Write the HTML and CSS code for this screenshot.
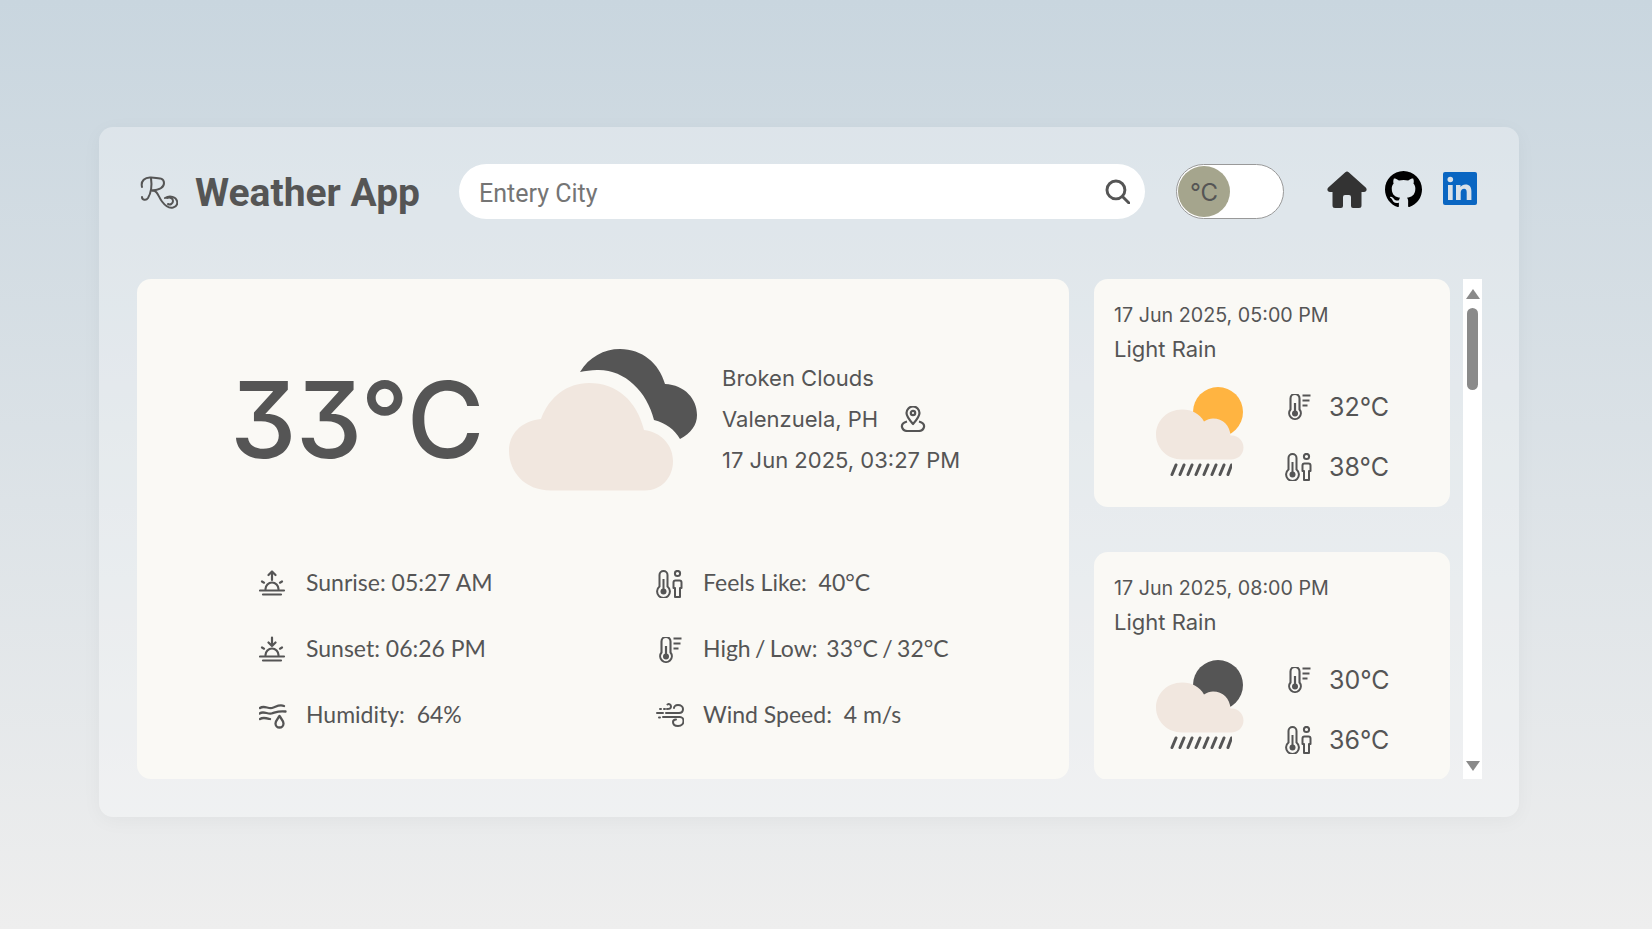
FILE: index.html
```html
<!DOCTYPE html>
<html lang="en">
<head>
<meta charset="utf-8">
<title>Weather App</title>
<link rel="stylesheet" href="styles.css">
</head>
<body>
<svg class="defs" aria-hidden="true">
  <symbol id="therm-lines" viewBox="0 0 24 26">
    <path d="M3.500 15.500V4.500a4.500 4.500 0 0 1 9 0v11a5.800 5.800 0 1 1-9 0z" fill="none" stroke="currentColor" stroke-width="2.100"/>
    <circle cx="8" cy="19.500" r="3" fill="currentColor"/>
    <path d="M8 9v10" stroke="currentColor" stroke-width="2.200"/>
    <path d="M15.500 1.500h8M15.500 6.500h7M15.500 11.500h5" stroke="currentColor" stroke-width="2.200"/>
  </symbol>
  <symbol id="therm-person" viewBox="0 0 28 28">
    <path d="M3.500 16.500V5a4 4 0 0 1 8 0v11.500a6.400 6.400 0 1 1-8 0z" fill="none" stroke="currentColor" stroke-width="2"/>
    <circle cx="7.500" cy="21.500" r="3" fill="currentColor"/>
    <path d="M7.500 9v12" stroke="currentColor" stroke-width="2"/>
    <circle cx="21.500" cy="3.500" r="2.600" fill="none" stroke="currentColor" stroke-width="2"/>
    <path d="M19 27v-9h-1.500v-5.500a2 2 0 0 1 2-2h4a2 2 0 0 1 2 2V18H24v9z" fill="none" stroke="currentColor" stroke-width="2" stroke-linejoin="round"/>
  </symbol>
  <symbol id="rain" viewBox="0 0 62 13">
    <path d="M2 11.500l4-9.500M10 11.500l4-9.500M18 11.500l4-9.500M26 11.500l4-9.500M34 11.500l4-9.500M42 11.500l4-9.500M50 11.500l4-9.500M58 11.500l3.500-9.500" fill="none" stroke="#555" stroke-width="3" stroke-linecap="round"/>
  </symbol>
  <symbol id="small-cloud" viewBox="0 0 88 51">
    <path d="M26 50.500C11 50.500 0 39 0 25.500S11 .5 26 .5c10 0 18 4.500 22 12 3-2 6-3 9-3 10 0 17 7 17.500 17H76c6 0 11.500 5 11.500 12S82 50.500 75 50.500z" fill="#f1e7df"/>
  </symbol>
</svg>

<main class="panel">
  <header class="topbar">
    <svg class="logo" viewBox="0 0 38 34" fill="none" stroke="#555" stroke-width="2" stroke-linecap="round" aria-label="Logo">
      <path d="M2 11C0.500 5 5 1 11 1.500c7 .5 13 0 13 5.500 0 5-6 7-12 7.500"/>
      <path d="M11 2c1 7 0 15-3 20-2 3-6 2-6-1"/>
      <path d="M12 14.500c6 0 6 6 10 11 3 4 7 7 11 6 3-1 5-3 4-6.500-1-4-7-6-12-3"/>
      <path d="M27 22c3-1 6 0 6 3s-3 4-5 3"/>
    </svg>
    <h1 class="title">Weather App</h1>
    <div class="search">
      <input class="search-input" type="text" placeholder="Entery City">
      <svg class="search-icon" viewBox="0 0 24 24" fill="none" stroke="#555" stroke-width="2.800" stroke-linecap="round"><circle cx="10.500" cy="10.500" r="8.600"/><path d="M17 17l6 6"/></svg>
    </div>
    <div class="toggle"><span class="knob">°C</span></div>
    <nav class="links">
      <svg class="home" viewBox="0 0 40 38"><path d="M20 1.500a2.500 2.500 0 0 1 1.700.7l17 15.300c1.900 1.800.6 4.500-1.700 4.500h-2.500v13.500a2.500 2.500 0 0 1-2.500 2.500h-6a2 2 0 0 1-2-2v-9a2 2 0 0 0-2-2h-4a2 2 0 0 0-2 2v9a2 2 0 0 1-2 2H8a2.500 2.500 0 0 1-2.500-2.500V22H3c-2.300 0-3.600-2.700-1.700-4.500l17-15.300a2.500 2.500 0 0 1 1.700-.7z" fill="#333"/></svg>
      <svg class="github" viewBox="0 0 16 16"><path d="M8 0C3.580 0 0 3.580 0 8c0 3.540 2.290 6.530 5.470 7.590.4.070.55-.17.55-.38 0-.19-.01-.82-.01-1.490-2.010.37-2.530-.49-2.690-.94-.09-.23-.48-.94-.82-1.130-.28-.15-.68-.52-.01-.53.63-.01 1.080.58 1.230.82.72 1.210 1.870.87 2.330.66.070-.52.28-.87.51-1.070-1.780-.2-3.640-.89-3.640-3.950 0-.87.31-1.590.82-2.150-.08-.2-.36-1.020.08-2.120 0 0 .67-.21 2.200.82.64-.18 1.320-.27 2-.27.68 0 1.360.09 2 .27 1.530-1.040 2.200-.82 2.200-.82.44 1.100.16 1.920.08 2.120.51.56.82 1.270.82 2.150 0 3.070-1.870 3.750-3.650 3.950.29.25.54.73.54 1.480 0 1.070-.01 1.930-.01 2.200 0 .21.15.46.55.38A8.013 8.013 0 0 0 16 8c0-4.420-3.580-8-8-8z" fill="#000"/></svg>
      <svg class="linkedin" viewBox="0 0 34 34"><rect width="34" height="33" rx="2" fill="#0a66c2"/><circle cx="7.300" cy="7.500" r="2.800" fill="#dae1e8"/><path d="M5 13h4.700v15H5zM13 13h4.500v2.100c1-1.500 2.700-2.500 4.900-2.500 4.200 0 6 2.600 6 6.900V28h-4.700v-7.700c0-2.200-.7-3.600-2.600-3.600-2 0-3.400 1.400-3.400 3.800V28H13z" fill="#dae1e8"/></svg>
    </nav>
  </header>

  <div class="content">
    <section class="current">
      <div class="hero">
        <div class="temp">33°C</div>
        <svg class="hero-icon" viewBox="0 0 188 142">
          <path d="M71 23C80 8 95 0 111 0c22 0 39 14 45 35 20 1 32 15 32 31 0 10-6 18-17 24-5-9-14-16-26-19C138 42 115 20 88 21c-6 0-12 1-17 2z" fill="#555"/>
          <path d="M42 141.500C15 141.500 0 122 0 102c0-17 12-30 32-32 8-22 26-36 48-36 28 0 48 18 55 47 17 2 29 15 29 31 0 17-12 29.500-28 29.500z" fill="#f1e7df"/>
        </svg>
        <div class="summary">
          <div class="summary-line">Broken Clouds</div>
          <div class="summary-line">Valenzuela, PH
            <svg class="pin" viewBox="0 0 26 26" fill="none" stroke="#555" stroke-width="2.200" stroke-linejoin="round"><path d="M13 18c-4-4.500-6.500-7.500-6.500-11a6.500 6.500 0 0 1 13 0c0 3.500-2.500 6.500-6.500 11z"/><circle cx="13" cy="7" r="2.200"/><path d="M7 15.500c-3.500 1-5.500 3-5 5.500.5 2.500 3 4 5.500 4h11c2.500 0 5-1.500 5.500-4 .5-2.500-1.500-4.500-5-5.500"/></svg>
          </div>
          <div class="summary-line">17 Jun 2025, 03:27 PM</div>
        </div>
      </div>
      <div class="stats">
        <div class="stat">
          <svg class="stat-icon" viewBox="0 0 28 28" fill="none" stroke="#555" stroke-width="2.200" stroke-linecap="round" stroke-linejoin="round"><path d="M13 10V1.500M9.500 5L13 1.500 16.500 5M6.500 19a6.500 6.500 0 0 1 13 0M1 20.500h24M4 24.500h18M3 11.500l2 1.200M23 11.500l-2 1.200"/></svg>
          <span>Sunrise: 05:27 AM</span>
        </div>
        <div class="stat">
          <svg class="stat-icon" viewBox="0 0 28 28"><use href="#therm-person" color="#555"/></svg>
          <span>Feels Like:&nbsp; 40°C</span>
        </div>
        <div class="stat">
          <svg class="stat-icon" viewBox="0 0 28 28" fill="none" stroke="#555" stroke-width="2.200" stroke-linecap="round" stroke-linejoin="round"><path d="M13 1.500V10M9.500 6.500L13 10l3.500-3.500M6.500 19a6.500 6.500 0 0 1 13 0M1 20.500h24M4 24.500h18M3 11.500l2 1.200M23 11.500l-2 1.200"/></svg>
          <span>Sunset: 06:26 PM</span>
        </div>
        <div class="stat">
          <svg class="stat-icon" viewBox="0 0 28 28"><use href="#therm-lines" x="2" y="1" width="24" height="26" color="#555"/></svg>
          <span class="stat-tight">High / Low:&nbsp; 33°C / 32°C</span>
        </div>
        <div class="stat">
          <svg class="stat-icon" viewBox="0 0 28 28" fill="none" stroke="#555" stroke-width="2.300" stroke-linecap="round" stroke-linejoin="round"><path d="M1 6c4-3 8 1 12 0s7-4 12-2M0.500 11.500c4-3 8 1 12 0s7-3 14-2M1 17c3-2 6-1 10 0"/><path d="M20.500 14c-2 3-4 5-4 7.500a4 4 0 0 0 8 0c0-2.500-2-4.500-4-7.500z"/></svg>
          <span>Humidity:&nbsp; 64%</span>
        </div>
        <div class="stat">
          <svg class="stat-icon" viewBox="0 0 28 28" fill="none" stroke="#555" stroke-width="2" stroke-linecap="round"><path d="M4 7h1M8 7h1M11 7c3 0 4-.5 4-2.500S13 1.500 11.500 2.500M1 11h6M10 11h13c3 0 4-2 4-4s-2-4-5-4-4 2-4 3M3 15.500h1M7 15h17c2 0 3.500 2 3.500 4s-1.500 5-5.500 5-5-2-5-4 1.500-2.500 3-2.500"/></svg>
          <span>Wind Speed:&nbsp; 4 m/s</span>
        </div>
      </div>
    </section>

    <section class="forecast">
      <article class="card">
        <div class="card-date">17 Jun 2025, 05:00 PM</div>
        <div class="card-desc">Light Rain</div>
        <div class="card-body">
          <div class="card-icon">
            <span class="orb orb-sun"></span>
            <svg class="card-cloud" viewBox="0 0 88 51"><use href="#small-cloud"/></svg>
            <svg class="card-rain" viewBox="0 0 62 13"><use href="#rain"/></svg>
          </div>
          <div class="card-temps">
            <div class="card-temp"><svg class="temp-icon" viewBox="0 0 28 28"><use href="#therm-lines" x="2" y="1" width="24" height="26"/></svg><span>32°C</span></div>
            <div class="card-temp"><svg class="temp-icon" viewBox="0 0 28 28"><use href="#therm-person"/></svg><span>38°C</span></div>
          </div>
        </div>
      </article>
      <article class="card">
        <div class="card-date">17 Jun 2025, 08:00 PM</div>
        <div class="card-desc">Light Rain</div>
        <div class="card-body">
          <div class="card-icon">
            <span class="orb orb-moon"></span>
            <svg class="card-cloud" viewBox="0 0 88 51"><use href="#small-cloud"/></svg>
            <svg class="card-rain" viewBox="0 0 62 13"><use href="#rain"/></svg>
          </div>
          <div class="card-temps">
            <div class="card-temp"><svg class="temp-icon" viewBox="0 0 28 28"><use href="#therm-lines" x="2" y="1" width="24" height="26"/></svg><span>30°C</span></div>
            <div class="card-temp"><svg class="temp-icon" viewBox="0 0 28 28"><use href="#therm-person"/></svg><span>36°C</span></div>
          </div>
        </div>
      </article>
    </section>

    <div class="scrollbar">
      <span class="arrow arrow-up"></span>
      <span class="thumb"></span>
      <span class="arrow arrow-down"></span>
    </div>
  </div>
</main>
</body>
</html>
```
FILE: styles.css
```css
* { box-sizing: border-box; }
html, body { height: 100%; }
body {
  margin: 0;
  height: 929px;
  overflow: hidden;
  padding: 127px 0 0 99px;
  background: linear-gradient(180deg, #c9d6df 0%, #eeeeee 100%);
  color: #555;
  font-family: "Inter", "Liberation Sans", sans-serif;
}
.defs { position: absolute; width: 0; height: 0; overflow: hidden; }

.panel {
  width: 1420px;
  height: 690px;
  padding: 37px 37px 38px 38px;
  border-radius: 14px;
  background: rgba(255, 255, 255, 0.3);
  box-shadow: 0 4px 20px rgba(0, 0, 0, 0.04);
}

.topbar { display: flex; align-items: center; height: 55px; margin-bottom: 60px; }
.logo { width: 38px; height: 34px; margin-left: 3px; margin-top: 3px; flex: none; }
.title {
  width: 222px;
  margin: 3px 42px 0 17px;
  font: 700 39px/1 "Roboto", sans-serif;
  white-space: nowrap;
  flex: none;
}
.search {
  display: flex;
  align-items: center;
  width: 686px;
  height: 55px;
  padding: 0 15px 0 20px;
  border-radius: 28px;
  background: #fff;
  flex: none;
}
.search-input {
  flex: 1;
  min-width: 0;
  border: 0;
  outline: 0;
  padding: 4px 0 0;
  background: transparent;
  font: 400 25px "Roboto", sans-serif;
  color: #555;
}
.search-input::placeholder { color: #757575; opacity: 1; }
.search-icon { width: 25px; height: 25px; flex: none; }

.toggle {
  display: flex;
  align-items: center;
  width: 108px;
  height: 55px;
  margin-left: 31px;
  padding-left: 1px;
  border: 1px solid #999;
  border-radius: 28px;
  background: #fff;
  flex: none;
}
.knob {
  display: flex;
  align-items: center;
  justify-content: center;
  width: 52px;
  height: 51px;
  padding-top: 2px;
  border-radius: 50%;
  background: #a5a58d;
  font: 400 24px "Inter", sans-serif;
  color: #555;
}

.links { display: flex; align-items: center; margin-left: 43px; margin-top: -5px; }
.home { width: 40px; height: 38px; }
.github { width: 37px; height: 37px; margin-left: 18px; }
.linkedin { width: 34px; height: 34px; margin-left: 21px; }

.content { display: flex; height: 500px; }
.current {
  width: 932px;
  height: 500px;
  padding: 70px 0 0 100px;
  border-radius: 14px;
  background: #faf9f5;
  flex: none;
}
.hero { display: flex; align-items: center; height: 142px; }
.temp {
  width: 279px;
  margin-left: -7px;
  font: 450 106px/1 "Inter", sans-serif;
  font-feature-settings: "cv09";
  letter-spacing: -0.8px;
  white-space: nowrap;
  flex: none;
}
.hero-icon { width: 188px; height: 142px; flex: none; }
.summary { margin-left: 25px; margin-top: -2px; font-size: 22px; }
.summary-line { display: flex; align-items: center; height: 41px; white-space: nowrap; }
.pin { width: 26px; height: 26px; margin-left: 22px; }

.stats {
  display: grid;
  grid-template-columns: 397px 1fr;
  grid-auto-rows: 66px;
  margin: 60px 0 0 22px;
}
.stat {
  display: flex;
  align-items: center;
  gap: 19px;
  font: 400 23px "Lato", sans-serif;
  white-space: nowrap;
}
.stat span { padding-bottom: 4px; }
.stat .stat-tight { word-spacing: -1.500px; }
.stat-icon { width: 28px; height: 28px; flex: none; }

.forecast {
  display: flex;
  flex-direction: column;
  gap: 45px;
  width: 356px;
  height: 500px;
  margin-left: 25px;
  overflow: hidden;
  flex: none;
}
.card {
  height: 228px;
  padding: 21px 20px 0;
  border-radius: 14px;
  background: #faf9f5;
  flex: none;
}
.card-date { font-size: 19.7px; line-height: 30px; white-space: nowrap; }
.card-desc { margin-top: 4px; font-size: 22px; line-height: 30px; }
.card-body { display: flex; margin-top: 11px; }
.card-icon { position: relative; width: 88px; height: 89px; margin: 12px 0 0 42px; flex: none; }
.orb {
  position: absolute;
  left: 37px;
  top: 0;
  width: 50px;
  height: 50px;
  border-radius: 50%;
}
.orb-sun { background: #ffb441; }
.orb-moon { background: #555; }
.card-cloud { position: absolute; left: 0; top: 22px; width: 88px; height: 51px; }
.card-rain { position: absolute; left: 14px; top: 76px; width: 62px; height: 13px; }
.card-temps { margin: 2px 0 0 41px; }
.card-temp {
  display: flex;
  align-items: center;
  gap: 16px;
  height: 60px;
  font-size: 25px;
  color: #555;
}
.temp-icon { width: 28px; height: 28px; color: #555; flex: none; }

.scrollbar {
  display: flex;
  flex-direction: column;
  align-items: center;
  width: 19px;
  height: 500px;
  margin-left: 13px;
  padding: 10px 0 8px;
  background: #fff;
  flex: none;
}
.arrow { width: 0; height: 0; border-left: 7px solid transparent; border-right: 7px solid transparent; }
.arrow-up { border-bottom: 10px solid #8a8a8a; }
.arrow-down { margin-top: auto; border-top: 10px solid #8a8a8a; }
.thumb {
  width: 11px;
  height: 82px;
  margin-top: 9px;
  border-radius: 6px;
  background: #8a8a8a;
}
```
